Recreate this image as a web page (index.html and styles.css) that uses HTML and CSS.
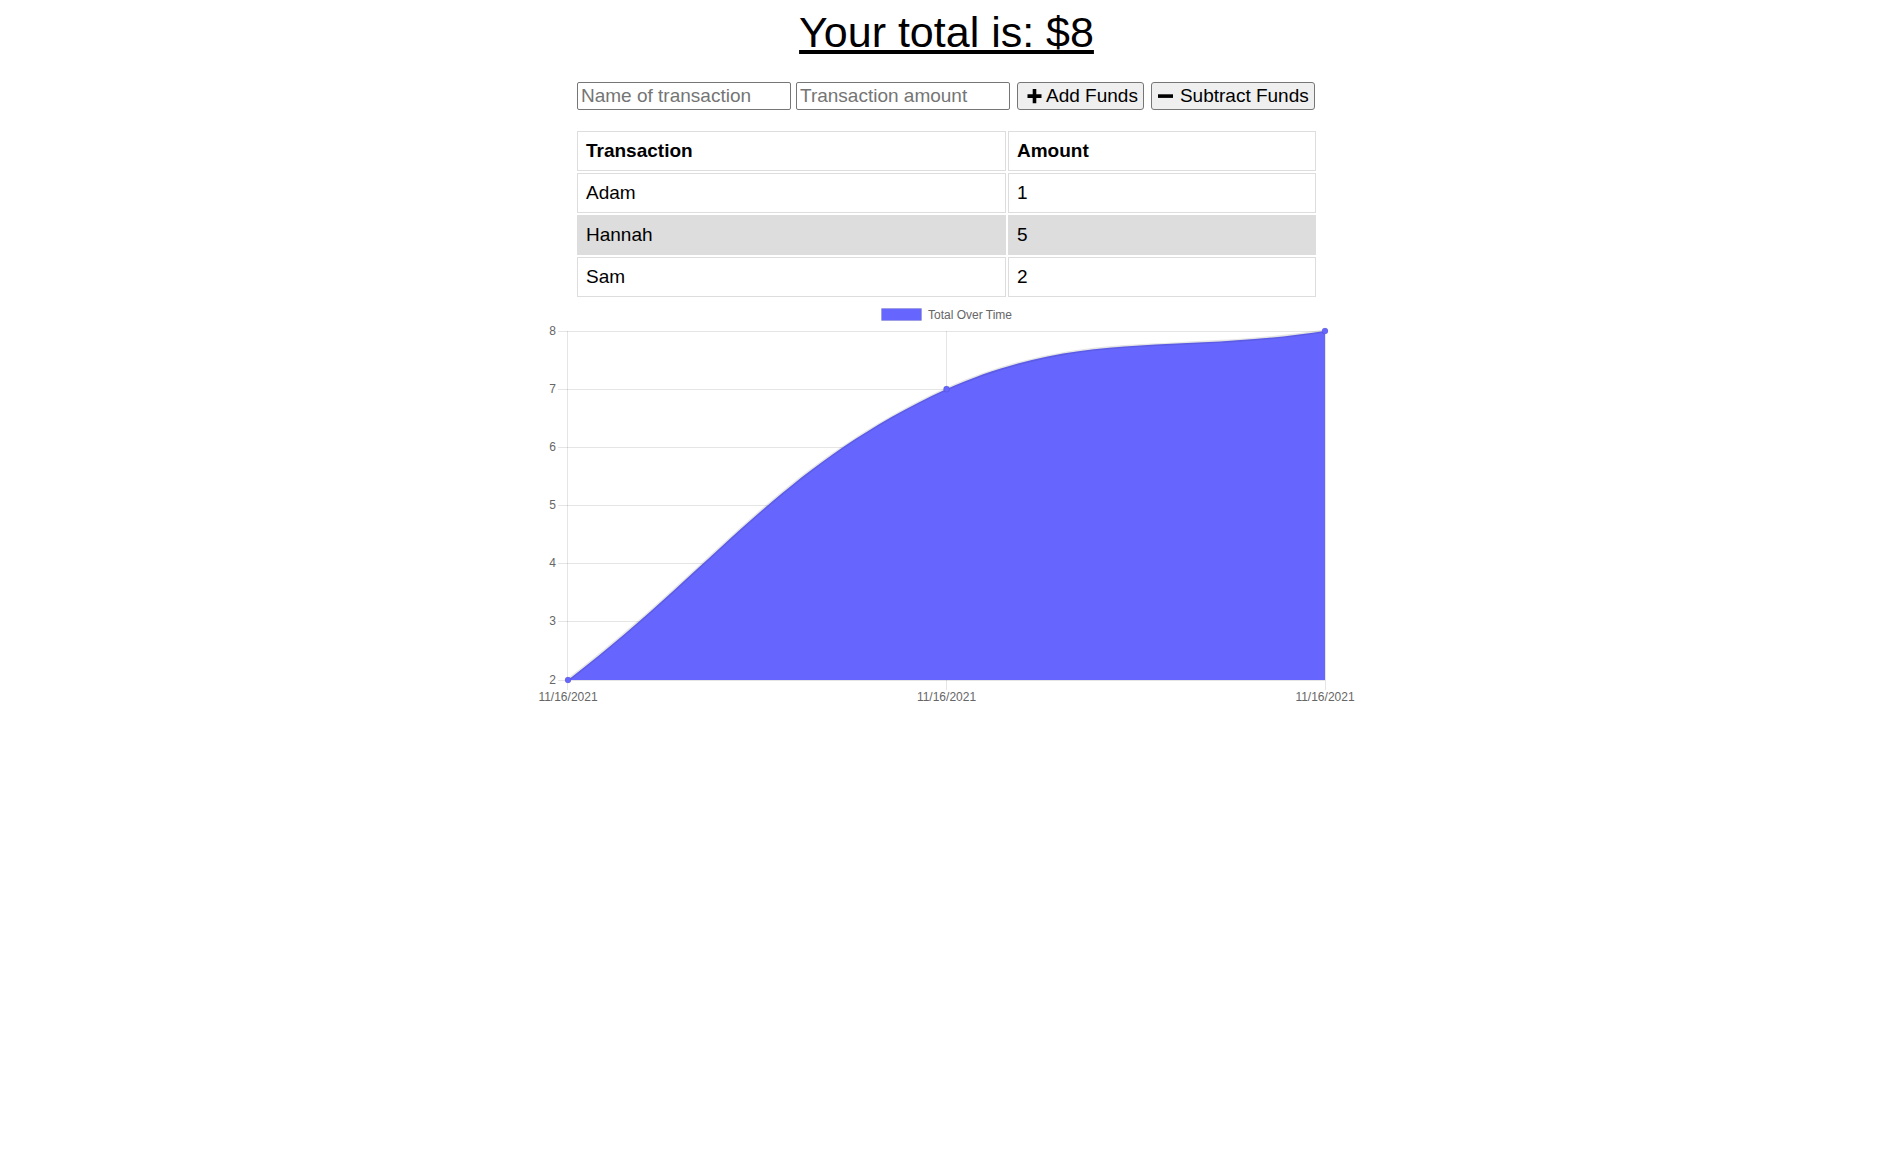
FILE: index.html
```html
<!DOCTYPE html>
<html lang="en">
<head>
<meta charset="utf-8">
<title>Budget Tracker</title>
<link rel="stylesheet" href="styles.css">
</head>
<body>
<main class="page">
  <h1 class="total">Your total is: $<span class="total-value">8</span></h1>
  <div class="form">
    <input type="text" class="field" placeholder="Name of transaction">
    <input type="number" class="field" placeholder="Transaction amount">
    <button class="btn btn-add"><svg class="icon" viewBox="0 0 20 20" width="20" height="20"><path d="M8.7 3h3.6v5.3h5.2v3.6h-5.2v5.3h-3.6v-5.3h-5.2v-3.6h5.2z" fill="#000"/></svg>Add Funds</button>
    <button class="btn btn-sub"><svg class="icon" viewBox="0 0 20 20" width="20" height="20"><rect x="0" y="8.3" width="15" height="3.6" fill="#000"/></svg>Subtract Funds</button>
  </div>
  <table class="ledger">
    <thead>
      <tr><th class="col-name">Transaction</th><th class="col-amount">Amount</th></tr>
    </thead>
    <tbody>
      <tr><td>Adam</td><td>1</td></tr>
      <tr class="shaded"><td>Hannah</td><td>5</td></tr>
      <tr><td>Sam</td><td>2</td></tr>
    </tbody>
  </table>
  <div class="chart">
    <svg class="chart-svg" width="839" height="410" viewBox="0 0 839 410">
      <g class="grid" stroke="rgba(0,0,0,0.1)" stroke-width="1" fill="none">
        <line x1="31" y1="31.5" x2="798" y2="31.5"/>
        <line x1="31" y1="89.5" x2="798" y2="89.5"/>
        <line x1="31" y1="147.5" x2="798" y2="147.5"/>
        <line x1="31" y1="205.5" x2="798" y2="205.5"/>
        <line x1="31" y1="263.5" x2="798" y2="263.5"/>
        <line x1="31" y1="321.5" x2="798" y2="321.5"/>
        <line x1="31" y1="380.5" x2="798" y2="380.5"/>
        <line x1="40.5" y1="31" x2="40.5" y2="390"/>
        <line x1="419.5" y1="31" x2="419.5" y2="390"/>
        <line x1="798.5" y1="31" x2="798.5" y2="390"/>
      </g>
      <g class="ylabels" text-anchor="end">
        <text x="29" y="35">8</text>
        <text x="29" y="93">7</text>
        <text x="29" y="151">6</text>
        <text x="29" y="209">5</text>
        <text x="29" y="267">4</text>
        <text x="29" y="325">3</text>
        <text x="29" y="384">2</text>
      </g>
      <g class="xlabels" text-anchor="middle">
        <text x="41" y="401">11/16/2021</text>
        <text x="419.5" y="401">11/16/2021</text>
        <text x="798" y="401">11/16/2021</text>
      </g>
      <path d="M41,380 C192.4,263.6 251.5,166.5 419.5,89 C554.3,29 646.6,54.2 798,31 L798,380 Z" fill="#6666ff"/>
      <path d="M41,380 C192.4,263.6 251.5,166.5 419.5,89 C554.3,29 646.6,54.2 798,31" fill="none" stroke="rgba(0,0,0,0.1)" stroke-width="3"/>
      <g fill="#6666ff" stroke="rgba(0,0,0,0.1)" stroke-width="1">
        <circle cx="41" cy="380" r="3"/>
        <circle cx="419.5" cy="89" r="3"/>
        <circle cx="798" cy="31" r="3"/>
      </g>
      <rect x="354.5" y="8.5" width="40" height="12" fill="#6666ff" stroke="rgba(0,0,0,0.1)" stroke-width="1"/>
      <text class="legend" x="401" y="19">Total Over Time</text>
    </svg>
  </div>
</main>
</body>
</html>
```
FILE: styles.css
```css
html, body {
  margin: 0;
  padding: 0;
  background: #fff;
}

body {
  font-family: "Liberation Sans", Arial, Helvetica, sans-serif;
  color: #000;
}

.page {
  display: flex;
  flex-direction: column;
  align-items: center;
}

.total {
  font-size: 43px;
  font-weight: normal;
  line-height: 50px;
  margin: 7px 0 0;
  text-decoration: underline;
}

.form {
  display: flex;
  align-items: center;
  margin-top: 25px;
  width: 739px;
}

.field {
  box-sizing: border-box;
  width: 214px;
  height: 28px;
  margin: 0 5px 0 0;
  padding: 1px 3px;
  border: 1px solid #767676;
  border-radius: 2px;
  font-family: "Liberation Sans", Arial, sans-serif;
  font-size: 19px;
  color: #000;
  background: #fff;
}

.field::placeholder {
  color: #757575;
}

.field + .field {
  margin-right: 7px;
}

.btn {
  box-sizing: border-box;
  display: flex;
  align-items: center;
  height: 28px;
  padding: 0 5px 0 6px;
  border: 1px solid #767676;
  border-radius: 3px;
  background: #efefef;
  font-family: "Liberation Sans", Arial, sans-serif;
  font-size: 19px;
  color: #000;
  white-space: nowrap;
}

.btn-add {
  margin-right: 7px;
}

.icon {
  display: block;
  margin-right: 2px;
  flex: none;
}

.ledger {
  margin-top: 19px;
  border-spacing: 2px;
  width: 743px;
  font-size: 19px;
}

.ledger th,
.ledger td {
  border: 1px solid #dddddd;
  padding: 8px;
  line-height: 22px;
  text-align: left;
}

.ledger th {
  font-weight: bold;
}

.col-name {
  width: 411px;
}

.col-amount {
  width: 290px;
}

.shaded td {
  background: #dddddd;
}

.chart {
  margin-top: 1px;
}

.chart-svg {
  display: block;
  font-family: "Liberation Sans", Arial, Helvetica, sans-serif;
  font-size: 12px;
}

.chart-svg text {
  fill: #666666;
}
```
